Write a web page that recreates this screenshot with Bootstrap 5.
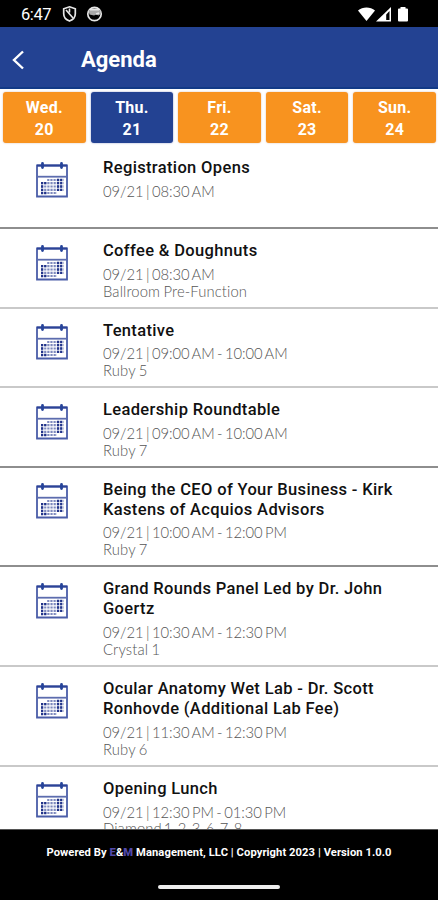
<!DOCTYPE html>
<html lang="en">
<head>
<meta charset="utf-8">
<meta name="viewport" content="width=device-width, initial-scale=1">
<title>Agenda</title>
<link href="https://cdn.jsdelivr.net/npm/bootstrap@5.3.0/dist/css/bootstrap.min.css" rel="stylesheet">
<style>
body{font-family:Roboto,"Liberation Sans",sans-serif;background:#fff;color:#111}
.screen{height:900px}
.status{height:27px;font-size:16.5px;letter-spacing:-.4px;line-height:27px;padding-left:21px;padding-top:1px;padding-right:29px}
.topbar{height:62px;background:#234292;border-bottom:2px solid #123a87;padding-left:12px}
.topbar h1{font-size:22px;font-weight:700;line-height:26px;margin-left:56px;padding-top:6px}
.topbar svg{margin-top:5px}
.days{height:57px;padding:3px 2px 3px 3px;gap:5px;background:#fff}
.day{flex:1 1 0;background:#f8931f;border-radius:3px;font-size:16px;font-weight:700;line-height:22px;padding-top:5px;letter-spacing:.25px;box-shadow:0 0 2px #d9b9a9}
.day.current{background:#234292;box-shadow:0 0 2px #8b94c4}
.agenda{overflow:hidden;min-height:0}
.entry{flex:none;height:79.6px;padding:12px 32px 0 35.5px;border-bottom:2px solid #c9c9c9}
.entry.first{height:83px}
.entry.tall{height:99.7px}
.entry.dark{border-color:#8e8e8e}
.entry svg{margin-top:3.6px;flex:none}
.entry .copy{margin-left:35.5px}
.entry h2{font-size:16.5px;font-weight:500;line-height:19.9px;margin:0 0 4.8px;letter-spacing:.35px}
.entry p{font-family:Lato,"Liberation Sans",sans-serif;font-weight:300;font-size:14.8px;line-height:16.8px;margin:0;color:#555;white-space:nowrap;letter-spacing:.12px;word-spacing:-.8px}
.entry h2 + p{letter-spacing:-.05px;word-spacing:-1.5px}
.entry p.rooms{word-spacing:-2.2px}
.foot{height:71px;background:#000;border-top:1px solid #555;font-size:11.2px;letter-spacing:.07px;font-weight:700;line-height:16px;padding-top:15px}
.foot b{color:#5148a8}
.handle{width:122px;height:4px;border-radius:2px;background:#eee;margin-bottom:11px}
</style>
<script src="https://cdn.jsdelivr.net/npm/bootstrap@5.3.0/dist/js/bootstrap.bundle.min.js"></script>
</head>
<body>
<svg class="d-none">
  <symbol id="cal" viewBox="0 0 32 36">
    <path d="M1 3.5h30v31H1z" fill="none" stroke="#4a5da8" stroke-width="1.8"/>
    <path d="M1 3.5h30" stroke="#2c4397" stroke-width="2"/>
    <path d="M1 14.7h30" stroke="#5c6cae" stroke-width="1.8"/>
    <path d="M6.500 1.500v4M25.500 1.500v4" stroke="#26449a" stroke-width="2.800" stroke-linecap="round"/>
    <path d="M11.200 18h16M5 21.200h22.200M5 24.500h22.200M5 27.800h22.200M5 31h16" stroke="#7d89bd" stroke-width="2.200" stroke-dasharray="2.200 .950"/>
    <path d="M21 18h6.500M21 21.200h6.500M21 24.500h6.500M21 27.800h6.500M5 21.200h5.500M5 24.500h2.200M5 27.800h2.200M5 31h5.500" stroke="#22348a" stroke-width="2.300" stroke-dasharray="2.200 .950"/>
  </symbol>
</svg>
<div class="screen d-flex flex-column overflow-hidden">
  <div class="status d-flex align-items-center bg-black text-white flex-shrink-0">
    <span>6:47</span>
    <svg width="44" height="18" viewBox="0 0 44 18" fill="none" stroke="#e6e6e6" class="ms-2">
      <path d="M10.500 1.800l5.800 2v4.900c0 3.200-2 5.900-5.800 7.300-3.800-1.400-5.800-4.100-5.800-7.300V3.800z" stroke-width="1.700"/>
      <path d="M7 5l7 8M10.500 3.500v4" stroke-width="1.600"/>
      <circle cx="35.500" cy="9" r="6.700" stroke-width="1.700"/>
      <path d="M29.500 5h12v4l-2 1.500-2-1-2.500 1-4.500-1z" fill="#aaa" stroke="none"/>
      <path d="M31 4.500h9M37 9l3-1" stroke-width="1.800"/>
    </svg>
    <svg class="ms-auto" width="51" height="18" viewBox="0 0 51 18" fill="#fff">
      <path d="M0 5.600C4.500 1.400 12.500 1.400 17 5.600L8.500 16z"/>
      <path d="M18 16.500L33 2v14.500z"/>
      <path d="M28.200 9.500L31.500 6v9h-3.300z" fill="#000"/>
      <path d="M42.500 2h5v1.500h1.500q1 0 1 1V15.500q0 1-1 1h-8q-1 0-1-1V4.500q0-1 1-1h1.500z"/>
    </svg>
  </div>
  <header class="topbar d-flex align-items-center text-white flex-shrink-0">
    <svg width="13" height="20" viewBox="0 0 13 20" fill="none" stroke="#fff" stroke-width="2.400"><path d="M11 1.500L2 10l9 8.500"/></svg>
    <h1 class="mb-0">Agenda</h1>
  </header>
  <nav class="days d-flex text-white text-center flex-shrink-0">
    <div class="day">Wed.<br>20</div>
    <div class="day current">Thu.<br>21</div>
    <div class="day">Fri.<br>22</div>
    <div class="day">Sat.<br>23</div>
    <div class="day">Sun.<br>24</div>
  </nav>
  <main class="agenda d-flex flex-column flex-grow-1">
    <article class="entry first dark d-flex align-items-start"><svg width="32" height="36"><use href="#cal"/></svg><div class="copy"><h2>Registration Opens</h2><p>09/21 | 08:30 AM</p></div></article>
    <article class="entry d-flex align-items-start"><svg width="32" height="36"><use href="#cal"/></svg><div class="copy"><h2>Coffee &amp; Doughnuts</h2><p>09/21 | 08:30 AM</p><p>Ballroom Pre-Function</p></div></article>
    <article class="entry d-flex align-items-start"><svg width="32" height="36"><use href="#cal"/></svg><div class="copy"><h2>Tentative</h2><p>09/21 | 09:00 AM - 10:00 AM</p><p>Ruby 5</p></div></article>
    <article class="entry dark d-flex align-items-start"><svg width="32" height="36"><use href="#cal"/></svg><div class="copy"><h2>Leadership Roundtable</h2><p>09/21 | 09:00 AM - 10:00 AM</p><p>Ruby 7</p></div></article>
    <article class="entry tall dark d-flex align-items-start"><svg width="32" height="36"><use href="#cal"/></svg><div class="copy"><h2>Being the CEO of Your Business - Kirk<br>Kastens of Acquios Advisors</h2><p>09/21 | 10:00 AM - 12:00 PM</p><p>Ruby 7</p></div></article>
    <article class="entry tall d-flex align-items-start"><svg width="32" height="36"><use href="#cal"/></svg><div class="copy"><h2>Grand Rounds Panel Led by Dr. John<br>Goertz</h2><p>09/21 | 10:30 AM - 12:30 PM</p><p>Crystal 1</p></div></article>
    <article class="entry tall d-flex align-items-start"><svg width="32" height="36"><use href="#cal"/></svg><div class="copy"><h2>Ocular Anatomy Wet Lab - Dr. Scott<br>Ronhovde (Additional Lab Fee)</h2><p>09/21 | 11:30 AM - 12:30 PM</p><p>Ruby 6</p></div></article>
    <article class="entry d-flex align-items-start"><svg width="32" height="36"><use href="#cal"/></svg><div class="copy"><h2>Opening Lunch</h2><p>09/21 | 12:30 PM - 01:30 PM</p><p class="rooms">Diamond 1, 2, 3, 6, 7, 8</p></div></article>
  </main>
  <footer class="foot d-flex flex-column align-items-center justify-content-between text-white flex-shrink-0">
    <div>Powered By <b>E</b>&amp;<b>M</b> Management, LLC | Copyright 2023 | Version 1.0.0</div>
    <div class="handle"></div>
  </footer>
</div>
</body>
</html>
